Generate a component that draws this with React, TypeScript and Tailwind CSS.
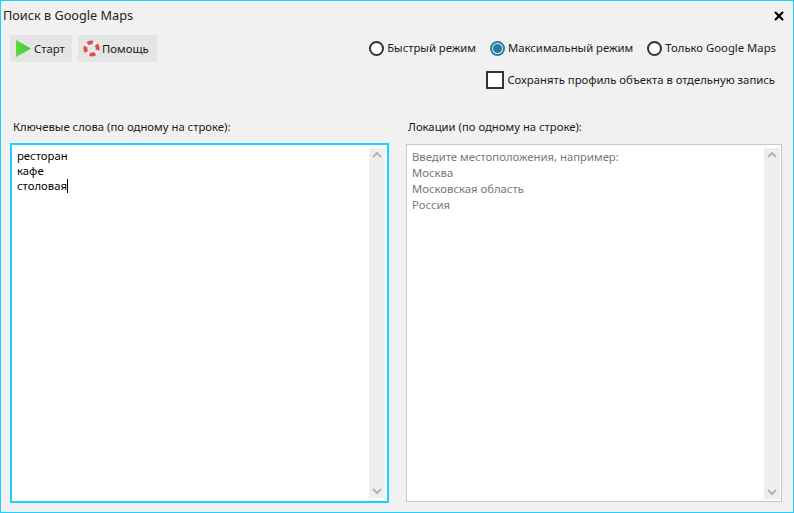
import { X } from "lucide-react";

function Chevron({ up }: { up?: boolean }) {
  return (
    <svg width="10" height="7" viewBox="0 0 10 7" className="text-[#b4b4b4]">
      <path d={up ? "M1 6 L5 2 L9 6" : "M1 1 L5 5 L9 1"} fill="none" stroke="currentColor" strokeWidth="2" />
    </svg>
  );
}

function Scroll() {
  return (
    <div className="w-4 h-full bg-[#efefef] flex flex-col items-center justify-between py-[3px]">
      <Chevron up />
      <Chevron />
    </div>
  );
}

function Radio({ label, on }: { label: string; on?: boolean }) {
  return (
    <div className="flex items-center gap-[3px]">
      {on ? (
        <span className="w-[15px] h-[15px] rounded-full border-2 border-[#2b78a8] flex items-center justify-center">
          <span className="w-[9px] h-[9px] rounded-full bg-[#2b78a8]" />
        </span>
      ) : (
        <span className="w-[15px] h-[15px] rounded-full border-2 border-[#333333] bg-white" />
      )}
      <span className="pb-[2px]">{label}</span>
    </div>
  );
}

export default function App() {
  return (
    <div className="w-[794px] h-[513px] border border-[#1ad1ff] bg-[#f1f1f1] overflow-hidden text-[11.3px] leading-4 text-[#1a1a1a] font-['Noto_Sans',sans-serif] flex flex-col">
      <div className="h-[34px] pl-[2px] pr-[7px] pt-[6px] flex justify-between items-start">
        <span className="text-[12.7px] text-[#222]">Поиск в Google Maps</span>
        <X size={14} strokeWidth={3.5} className="text-black mt-[2px]" />
      </div>

      <div className="h-[82px] pl-[9px] pr-[16px] flex justify-between items-start">
        <div className="flex gap-[6px]">
          <button className="h-[27px] w-[62px] bg-[#e5e5e5] flex items-center pl-[6px] gap-[3px]">
            <svg width="15" height="17" viewBox="0 0 15 17">
              <defs>
                <linearGradient id="pl" x1="0" y1="0" x2="1" y2="0">
                  <stop offset="0" stopColor="#5fd93f" />
                  <stop offset="1" stopColor="#3cc840" />
                </linearGradient>
              </defs>
              <polygon points="0,0 15,8.5 0,17" fill="url(#pl)" />
            </svg>
            <span>Старт</span>
          </button>
          <button className="h-[27px] w-[79px] bg-[#e5e5e5] flex items-center pl-[5px] gap-[2px]">
            <svg width="17" height="17" viewBox="0 0 17 17">
              <circle cx="8.5" cy="8.5" r="8.2" fill="#d6d6d6" />
              <circle cx="8.5" cy="8.5" r="6" fill="none" stroke="#f4f2f0" strokeWidth="4" />
              <circle cx="8.5" cy="8.5" r="6" fill="none" stroke="#e8494a" strokeWidth="4" strokeDasharray="5.4 4" transform="rotate(-130 8.5 8.5)" />
              <circle cx="8.5" cy="8.5" r="4" fill="#e8e8e8" />
            </svg>
            <span>Помощь</span>
          </button>
        </div>
        <div className="flex flex-col items-end">
          <div className="flex gap-[14px] h-[27px] items-center mr-[1px]">
            <Radio label="Быстрый режим" />
            <Radio label="Максимальный режим" on />
            <Radio label="Только Google Maps" />
          </div>
          <div className="flex items-center gap-[3px] mt-[9px] mr-[2px]">
            <span className="w-[18px] h-[18px] border-2 border-[#333333] bg-white" />
            <span className="pb-[1px]">Сохранять профиль объекта в отдельную запись</span>
          </div>
        </div>
      </div>

      <div className="flex pl-[9px] gap-[17px]">
        <div className="w-[379px]">
          <div className="pl-[3px] h-[26px] pt-[2px]">Ключевые слова (по одному на строке):</div>
          <div className="h-[360px] border-2 border-[#1ad1ff] bg-white flex justify-between pl-[5px] pr-[2px] py-[3px]">
            <div className="leading-[15px] text-black">
              <div>ресторан</div>
              <div>кафе</div>
              <div className="flex items-center">
                столовая<span className="w-px h-[14px] bg-black" />
              </div>
            </div>
            <Scroll />
          </div>
        </div>
        <div className="w-[376px]">
          <div className="pl-[2px] h-[26px] pt-[2px] mb-px">Локации (по одному на строке):</div>
          <div className="h-[358px] border border-[#c8c8c8] bg-white flex justify-between pl-[5px] pr-[1px] pt-[3px] pb-[2px]">
            <div className="leading-[16px] pt-[1px] text-[#787878]">
              <div>Введите местоположения, например:</div>
              <div>Москва</div>
              <div>Московская область</div>
              <div>Россия</div>
            </div>
            <Scroll />
          </div>
        </div>
      </div>
    </div>
  );
}
